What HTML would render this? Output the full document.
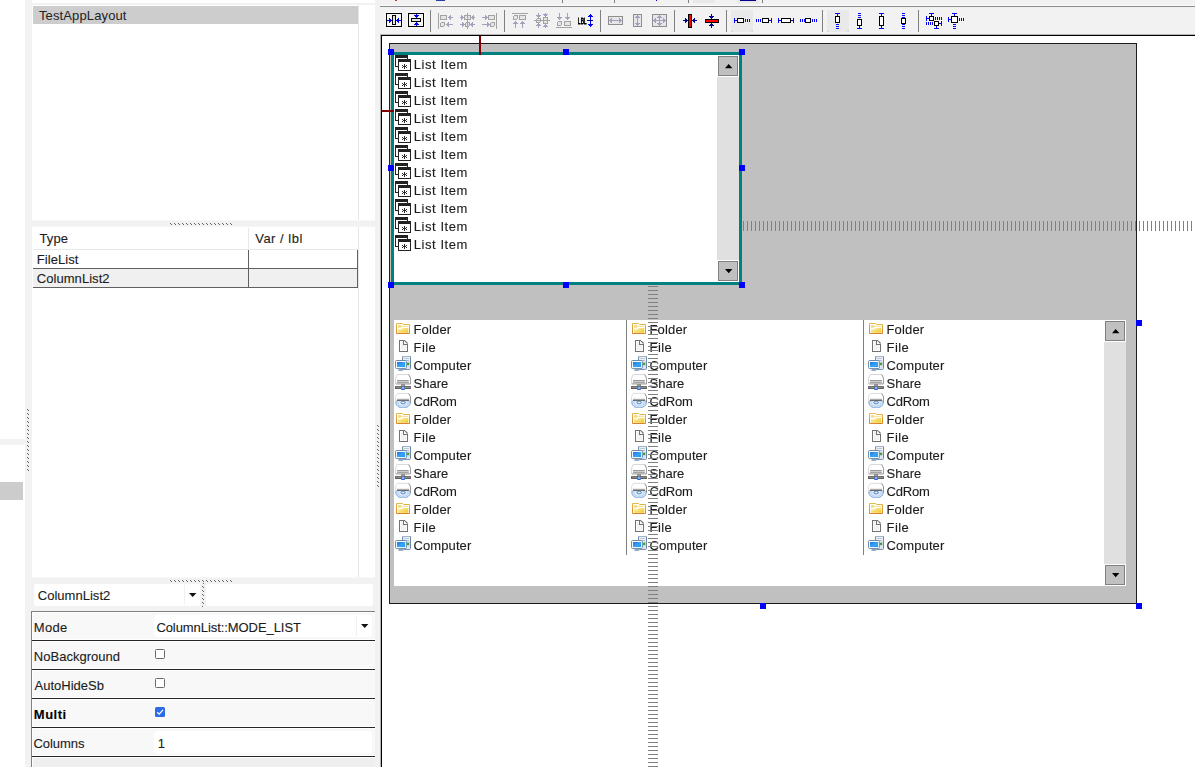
<!DOCTYPE html>
<html><head><meta charset="utf-8"><title>Layout designer</title>
<style>
html,body{margin:0;padding:0;background:#fff;}
#root{position:relative;width:1195px;height:767px;overflow:hidden;background:#fff;font-family:"Liberation Sans",sans-serif;font-size:13px;line-height:16px;color:#1c1c1c;}
#root div,#root svg{position:absolute;}
.t{white-space:pre;height:16px;-webkit-text-stroke:0.12px #1c1c1c;}
svg{overflow:visible;}
</style></head><body>
<div id="root">
<div style="left:0px;top:439px;width:25px;height:6px;background:#f2f2f2;"></div>
<div style="left:0px;top:482px;width:23px;height:18px;background:#cccccc;"></div>
<div style="left:25px;top:0px;width:7px;height:767px;background:#f2f2f2;"></div>
<div style="left:32px;top:3px;width:343px;height:2px;background:#f2f2f2;"></div>
<div style="left:32px;top:0px;width:343px;height:3px;background:#fff;border-radius:0 0 3px 3px;"></div>
<div style="left:32px;top:5px;width:343px;height:216px;background:#fff;"></div>
<div style="left:33px;top:6px;width:325px;height:18px;background:#cdcdcd;"></div>
<div style="left:358px;top:5px;width:1px;height:572px;background:#e6e6e6;"></div>
<div class="t" style="left:39px;top:8px;letter-spacing:0.12px;color:#222;-webkit-text-stroke:0;">TestAppLayout</div>
<div style="left:25px;top:221px;width:350px;height:6px;background:#f2f2f2;"></div>
<div style="left:32px;top:220px;width:343px;height:1px;background:#f9f9f9;"></div>
<div style="left:32px;top:226px;width:343px;height:1px;background:#f5f5f5;"></div>
<div style="left:32px;top:227px;width:343px;height:350px;background:#fff;"></div>
<div style="left:358px;top:227px;width:1px;height:350px;background:#e6e6e6;"></div>
<div class="t" style="left:39.5px;top:231px;letter-spacing:0.13px;">Type</div>
<div class="t" style="left:255.2px;top:231px;letter-spacing:0.5px;">Var / lbl</div>
<div style="left:33px;top:249px;width:325px;height:1px;background:#e8e8e8;"></div>
<div style="left:248px;top:228px;width:1px;height:21px;background:#e8e8e8;"></div>
<div style="left:33px;top:269px;width:325px;height:18px;background:#f0f0f0;"></div>
<div style="left:33px;top:268px;width:325px;height:1px;background:#606060;"></div>
<div style="left:33px;top:287px;width:325px;height:1px;background:#606060;"></div>
<div style="left:248px;top:250px;width:1px;height:38px;background:#606060;"></div>
<div style="left:357px;top:250px;width:1px;height:38px;background:#606060;"></div>
<div class="t" style="left:36.8px;top:252px;letter-spacing:0.06px;">FileList</div>
<div class="t" style="left:36.8px;top:271px;letter-spacing:0.05px;">ColumnList2</div>
<div style="left:25px;top:577px;width:350px;height:7px;background:#f2f2f2;"></div>
<div style="left:32px;top:577px;width:343px;height:1px;background:#f8f8f8;"></div>
<div style="left:25px;top:584px;width:350px;height:28px;background:#f2f2f2;"></div>
<div style="left:34px;top:584px;width:166px;height:22px;background:#fff;border-radius:2px;"></div>
<div style="left:184px;top:585px;width:1px;height:20px;background:#f0f0f0;"></div>
<div class="t" style="left:37.8px;top:588px;letter-spacing:0.02px;">ColumnList2</div>
<svg style="left:189px;top:593px" width="8" height="5" viewBox="0 0 8 5"><path d="M0 0H7.4L3.7 4Z" fill="#111"/></svg>
<div style="left:206px;top:584px;width:167px;height:22px;background:#fff;border-radius:2px;"></div>
<svg style="left:170px;top:223px" width="64" height="2" shape-rendering="crispEdges"><rect x="0" y="0" width="1" height="1" fill="#666"/><rect x="1" y="1" width="1" height="1" fill="#666"/><rect x="4" y="0" width="1" height="1" fill="#666"/><rect x="5" y="1" width="1" height="1" fill="#666"/><rect x="8" y="0" width="1" height="1" fill="#666"/><rect x="9" y="1" width="1" height="1" fill="#666"/><rect x="12" y="0" width="1" height="1" fill="#666"/><rect x="13" y="1" width="1" height="1" fill="#666"/><rect x="16" y="0" width="1" height="1" fill="#666"/><rect x="17" y="1" width="1" height="1" fill="#666"/><rect x="20" y="0" width="1" height="1" fill="#666"/><rect x="21" y="1" width="1" height="1" fill="#666"/><rect x="24" y="0" width="1" height="1" fill="#666"/><rect x="25" y="1" width="1" height="1" fill="#666"/><rect x="28" y="0" width="1" height="1" fill="#666"/><rect x="29" y="1" width="1" height="1" fill="#666"/><rect x="32" y="0" width="1" height="1" fill="#666"/><rect x="33" y="1" width="1" height="1" fill="#666"/><rect x="36" y="0" width="1" height="1" fill="#666"/><rect x="37" y="1" width="1" height="1" fill="#666"/><rect x="40" y="0" width="1" height="1" fill="#666"/><rect x="41" y="1" width="1" height="1" fill="#666"/><rect x="44" y="0" width="1" height="1" fill="#666"/><rect x="45" y="1" width="1" height="1" fill="#666"/><rect x="48" y="0" width="1" height="1" fill="#666"/><rect x="49" y="1" width="1" height="1" fill="#666"/><rect x="52" y="0" width="1" height="1" fill="#666"/><rect x="53" y="1" width="1" height="1" fill="#666"/><rect x="56" y="0" width="1" height="1" fill="#666"/><rect x="57" y="1" width="1" height="1" fill="#666"/><rect x="60" y="0" width="1" height="1" fill="#666"/><rect x="61" y="1" width="1" height="1" fill="#666"/></svg>
<svg style="left:170px;top:580px" width="64" height="2" shape-rendering="crispEdges"><rect x="0" y="0" width="1" height="1" fill="#666"/><rect x="1" y="1" width="1" height="1" fill="#666"/><rect x="4" y="0" width="1" height="1" fill="#666"/><rect x="5" y="1" width="1" height="1" fill="#666"/><rect x="8" y="0" width="1" height="1" fill="#666"/><rect x="9" y="1" width="1" height="1" fill="#666"/><rect x="12" y="0" width="1" height="1" fill="#666"/><rect x="13" y="1" width="1" height="1" fill="#666"/><rect x="16" y="0" width="1" height="1" fill="#666"/><rect x="17" y="1" width="1" height="1" fill="#666"/><rect x="20" y="0" width="1" height="1" fill="#666"/><rect x="21" y="1" width="1" height="1" fill="#666"/><rect x="24" y="0" width="1" height="1" fill="#666"/><rect x="25" y="1" width="1" height="1" fill="#666"/><rect x="28" y="0" width="1" height="1" fill="#666"/><rect x="29" y="1" width="1" height="1" fill="#666"/><rect x="32" y="0" width="1" height="1" fill="#666"/><rect x="33" y="1" width="1" height="1" fill="#666"/><rect x="36" y="0" width="1" height="1" fill="#666"/><rect x="37" y="1" width="1" height="1" fill="#666"/><rect x="40" y="0" width="1" height="1" fill="#666"/><rect x="41" y="1" width="1" height="1" fill="#666"/><rect x="44" y="0" width="1" height="1" fill="#666"/><rect x="45" y="1" width="1" height="1" fill="#666"/><rect x="48" y="0" width="1" height="1" fill="#666"/><rect x="49" y="1" width="1" height="1" fill="#666"/><rect x="52" y="0" width="1" height="1" fill="#666"/><rect x="53" y="1" width="1" height="1" fill="#666"/><rect x="56" y="0" width="1" height="1" fill="#666"/><rect x="57" y="1" width="1" height="1" fill="#666"/><rect x="60" y="0" width="1" height="1" fill="#666"/><rect x="61" y="1" width="1" height="1" fill="#666"/></svg>
<svg style="left:27px;top:409px" width="2" height="64" shape-rendering="crispEdges"><rect x="0" y="0" width="1" height="1" fill="#666"/><rect x="1" y="1" width="1" height="1" fill="#666"/><rect x="0" y="4" width="1" height="1" fill="#666"/><rect x="1" y="5" width="1" height="1" fill="#666"/><rect x="0" y="8" width="1" height="1" fill="#666"/><rect x="1" y="9" width="1" height="1" fill="#666"/><rect x="0" y="12" width="1" height="1" fill="#666"/><rect x="1" y="13" width="1" height="1" fill="#666"/><rect x="0" y="16" width="1" height="1" fill="#666"/><rect x="1" y="17" width="1" height="1" fill="#666"/><rect x="0" y="20" width="1" height="1" fill="#666"/><rect x="1" y="21" width="1" height="1" fill="#666"/><rect x="0" y="24" width="1" height="1" fill="#666"/><rect x="1" y="25" width="1" height="1" fill="#666"/><rect x="0" y="28" width="1" height="1" fill="#666"/><rect x="1" y="29" width="1" height="1" fill="#666"/><rect x="0" y="32" width="1" height="1" fill="#666"/><rect x="1" y="33" width="1" height="1" fill="#666"/><rect x="0" y="36" width="1" height="1" fill="#666"/><rect x="1" y="37" width="1" height="1" fill="#666"/><rect x="0" y="40" width="1" height="1" fill="#666"/><rect x="1" y="41" width="1" height="1" fill="#666"/><rect x="0" y="44" width="1" height="1" fill="#666"/><rect x="1" y="45" width="1" height="1" fill="#666"/><rect x="0" y="48" width="1" height="1" fill="#666"/><rect x="1" y="49" width="1" height="1" fill="#666"/><rect x="0" y="52" width="1" height="1" fill="#666"/><rect x="1" y="53" width="1" height="1" fill="#666"/><rect x="0" y="56" width="1" height="1" fill="#666"/><rect x="1" y="57" width="1" height="1" fill="#666"/><rect x="0" y="60" width="1" height="1" fill="#666"/><rect x="1" y="61" width="1" height="1" fill="#666"/></svg>
<svg style="left:202px;top:583px" width="2" height="25" shape-rendering="crispEdges"><rect x="1" y="0" width="1" height="1" fill="#666"/><rect x="0" y="3" width="1" height="1" fill="#666"/><rect x="1" y="4" width="1" height="1" fill="#666"/><rect x="0" y="7" width="1" height="1" fill="#666"/><rect x="1" y="8" width="1" height="1" fill="#666"/><rect x="0" y="11" width="1" height="1" fill="#666"/><rect x="1" y="12" width="1" height="1" fill="#666"/><rect x="0" y="15" width="1" height="1" fill="#666"/><rect x="1" y="16" width="1" height="1" fill="#666"/><rect x="0" y="19" width="1" height="1" fill="#666"/><rect x="1" y="20" width="1" height="1" fill="#666"/><rect x="0" y="23" width="1" height="1" fill="#666"/></svg>
<div style="left:32px;top:612px;width:343px;height:155px;background:#f8f8f8;"></div>
<div style="left:32px;top:757px;width:343px;height:10px;background:#efefef;"></div>
<div style="left:31px;top:611px;width:1px;height:156px;background:#808080;"></div>
<div style="left:32px;top:611px;width:343px;height:1px;background:#808080;"></div>
<div style="left:32px;top:612px;width:343px;height:1px;background:#fff;"></div>
<div style="left:32px;top:612px;width:1px;height:155px;background:#fff;"></div>
<div style="left:32px;top:639px;width:343px;height:1px;background:#fff;"></div>
<div style="left:32px;top:641px;width:343px;height:1px;background:#fff;"></div>
<div style="left:32px;top:640px;width:343px;height:1px;background:#262626;"></div>
<div style="left:32px;top:668px;width:343px;height:1px;background:#fff;"></div>
<div style="left:32px;top:670px;width:343px;height:1px;background:#fff;"></div>
<div style="left:32px;top:669px;width:343px;height:1px;background:#262626;"></div>
<div style="left:32px;top:697px;width:343px;height:1px;background:#fff;"></div>
<div style="left:32px;top:699px;width:343px;height:1px;background:#fff;"></div>
<div style="left:32px;top:698px;width:343px;height:1px;background:#262626;"></div>
<div style="left:32px;top:726px;width:343px;height:1px;background:#fff;"></div>
<div style="left:32px;top:728px;width:343px;height:1px;background:#fff;"></div>
<div style="left:32px;top:727px;width:343px;height:1px;background:#262626;"></div>
<div style="left:32px;top:755px;width:343px;height:1px;background:#fff;"></div>
<div style="left:32px;top:757px;width:343px;height:1px;background:#fff;"></div>
<div style="left:32px;top:756px;width:343px;height:1px;background:#262626;"></div>
<div class="t" style="left:33.8px;top:620px;letter-spacing:0.27px;">Mode</div>
<div class="t" style="left:33.8px;top:649px;letter-spacing:0.02px;">NoBackground</div>
<div class="t" style="left:34.5px;top:678px;">AutoHideSb</div>
<div class="t" style="left:33.8px;top:707px;letter-spacing:0.5px;font-weight:bold;color:#000;">Multi</div>
<div class="t" style="left:33.5px;top:736px;letter-spacing:-0.07px;">Columns</div>
<div style="left:154px;top:615px;width:218px;height:22px;background:#fff;border-radius:3px;"></div>
<div style="left:356px;top:616px;width:1px;height:20px;background:#f0f0f0;"></div>
<div class="t" style="left:156.4px;top:620px;letter-spacing:-0.07px;">ColumnList::MODE_LIST</div>
<svg style="left:361px;top:624px" width="8" height="5" viewBox="0 0 8 5"><path d="M0 0H7.4L3.7 4Z" fill="#111"/></svg>
<div style="left:155px;top:649px;width:10px;height:10px;background:#fff;border:1px solid #6a6a6a;border-radius:1.5px;box-sizing:border-box;"></div>
<div style="left:155px;top:678px;width:10px;height:10px;background:#fff;border:1px solid #6a6a6a;border-radius:1.5px;box-sizing:border-box;"></div>
<div style="left:155px;top:707px;width:10px;height:10px;background:#2b6be8;border-radius:1.5px;"></div>
<svg style="left:155px;top:707px" width="10" height="10" viewBox="0 0 10 10"><path d="M2.2 5.2L4.2 7.1L8 2.9" fill="none" stroke="#fff" stroke-width="1.3"/></svg>
<div style="left:154px;top:731px;width:218px;height:22px;background:#fff;border-radius:3px;"></div>
<div class="t" style="left:157.8px;top:736px;">1</div>
<div style="left:375px;top:0px;width:820px;height:36px;background:#f2f2f2;"></div>
<div style="left:375px;top:0px;width:6px;height:767px;background:#f2f2f2;"></div>
<svg style="left:0;top:0" width="1195" height="36" viewBox="0 0 1195 36" shape-rendering="crispEdges"><rect x="395" y="0" width="2" height="1" fill="#d03030"/><rect x="436" y="0" width="9" height="1" fill="#2a3ea0"/><rect x="562" y="0" width="1" height="3" fill="#808080"/><rect x="614" y="0" width="1" height="3" fill="#808080"/><rect x="688" y="0" width="1" height="3" fill="#808080"/><rect x="762" y="0" width="1" height="3" fill="#808080"/><rect x="656" y="0" width="1" height="1" fill="#0000ff"/><rect x="693" y="0" width="22" height="3" fill="#e8e8e8"/><rect x="737" y="0" width="22" height="3" fill="#e8e8e8"/><rect x="740" y="0" width="16" height="1" fill="#00008b"/><rect x="380" y="5" width="815" height="1" fill="#fafafa"/><rect x="380" y="6" width="815" height="1" fill="#8c8c8c"/><rect x="430" y="10" width="1" height="22" fill="#808080"/><rect x="504" y="10" width="1" height="22" fill="#808080"/><rect x="600" y="10" width="1" height="22" fill="#808080"/><rect x="674" y="10" width="1" height="22" fill="#808080"/><rect x="726" y="10" width="1" height="22" fill="#808080"/><rect x="822" y="10" width="1" height="22" fill="#808080"/><rect x="918" y="10" width="1" height="22" fill="#808080"/><rect x="731" y="10" width="22" height="22" fill="#e9e9e9"/><rect x="731" y="31" width="2" height="1" fill="#d8d8d8"/><rect x="731" y="30" width="1" height="1" fill="#d8d8d8"/><rect x="751" y="31" width="2" height="1" fill="#d8d8d8"/><rect x="752" y="30" width="1" height="1" fill="#d8d8d8"/><rect x="827" y="10" width="22" height="22" fill="#e9e9e9"/><rect x="827" y="31" width="2" height="1" fill="#d8d8d8"/><rect x="827" y="30" width="1" height="1" fill="#d8d8d8"/><rect x="847" y="31" width="2" height="1" fill="#d8d8d8"/><rect x="848" y="30" width="1" height="1" fill="#d8d8d8"/><rect x="385" y="12" width="18" height="16" fill="#fafafa"/><rect x="386.5" y="13.5" width="15" height="13" fill="#f6f6f2" stroke="#000"/><rect x="392.5" y="15.5" width="3" height="9" fill="#e4e4e4" stroke="#000"/><rect x="387" y="20" width="5" height="1" fill="#0000ff"/><rect x="390" y="19" width="1" height="3" fill="#0000ff"/><rect x="389" y="18" width="1" height="5" fill="#0000ff"/><rect x="396" y="20" width="5" height="1" fill="#0000ff"/><rect x="397" y="19" width="1" height="3" fill="#0000ff"/><rect x="398" y="18" width="1" height="5" fill="#0000ff"/><rect x="407" y="12" width="18" height="16" fill="#fafafa"/><rect x="408.5" y="13.5" width="15" height="13" fill="#f6f6f2" stroke="#000"/><rect x="411.5" y="18.5" width="9" height="3" fill="#e4e4e4" stroke="#000"/><rect x="416" y="14" width="1" height="4" fill="#0000ff"/><rect x="415" y="16" width="3" height="1" fill="#0000ff"/><rect x="414" y="15" width="5" height="1" fill="#0000ff"/><rect x="416" y="22" width="1" height="4" fill="#0000ff"/><rect x="415" y="23" width="3" height="1" fill="#0000ff"/><rect x="414" y="24" width="5" height="1" fill="#0000ff"/><rect x="438" y="13" width="1" height="16" fill="#a3a3a3"/><rect x="440.5" y="15.5" width="6" height="4" fill="#e6e6e6" stroke="#a3a3a3"/><rect x="448" y="17" width="5" height="1" fill="#a2a2c0"/><rect x="449" y="16" width="1" height="3" fill="#a2a2c0"/><rect x="450" y="15" width="1" height="5" fill="#a2a2c0"/><rect x="440.5" y="22.5" width="4" height="4" rx="1.5" fill="#e6e6e6" stroke="#a3a3a3"/><rect x="446" y="24" width="7" height="1" fill="#a2a2c0"/><rect x="447" y="23" width="1" height="3" fill="#a2a2c0"/><rect x="448" y="22" width="1" height="5" fill="#a2a2c0"/><rect x="467" y="13" width="1" height="16" fill="#a3a3a3"/><rect x="464.5" y="15.5" width="6" height="4" fill="#e6e6e6" stroke="#a3a3a3"/><rect x="460" y="17" width="4" height="1" fill="#a2a2c0"/><rect x="462" y="16" width="1" height="3" fill="#a2a2c0"/><rect x="461" y="15" width="1" height="5" fill="#a2a2c0"/><rect x="471" y="17" width="4" height="1" fill="#a2a2c0"/><rect x="472" y="16" width="1" height="3" fill="#a2a2c0"/><rect x="473" y="15" width="1" height="5" fill="#a2a2c0"/><rect x="465.5" y="22.5" width="4" height="4" rx="1.5" fill="#e6e6e6" stroke="#a3a3a3"/><rect x="460" y="24" width="5" height="1" fill="#a2a2c0"/><rect x="463" y="23" width="1" height="3" fill="#a2a2c0"/><rect x="462" y="22" width="1" height="5" fill="#a2a2c0"/><rect x="470" y="24" width="5" height="1" fill="#a2a2c0"/><rect x="471" y="23" width="1" height="3" fill="#a2a2c0"/><rect x="472" y="22" width="1" height="5" fill="#a2a2c0"/><rect x="467" y="14" width="1" height="14" fill="#a3a3a3"/><rect x="496" y="13" width="1" height="16" fill="#a3a3a3"/><rect x="488.5" y="15.5" width="6" height="4" fill="#e6e6e6" stroke="#a3a3a3"/><rect x="482" y="17" width="6" height="1" fill="#a2a2c0"/><rect x="486" y="16" width="1" height="3" fill="#a2a2c0"/><rect x="485" y="15" width="1" height="5" fill="#a2a2c0"/><rect x="490.5" y="22.5" width="4" height="4" rx="1.5" fill="#e6e6e6" stroke="#a3a3a3"/><rect x="482" y="24" width="8" height="1" fill="#a2a2c0"/><rect x="488" y="23" width="1" height="3" fill="#a2a2c0"/><rect x="487" y="22" width="1" height="5" fill="#a2a2c0"/><rect x="512" y="13" width="16" height="1" fill="#a3a3a3"/><rect x="513.5" y="15.5" width="4" height="4" rx="1.5" fill="#e6e6e6" stroke="#a3a3a3"/><rect x="519.5" y="15.5" width="6" height="4" fill="#e6e6e6" stroke="#a3a3a3"/><rect x="515" y="21" width="1" height="7" fill="#a2a2c0"/><rect x="514" y="22" width="3" height="1" fill="#a2a2c0"/><rect x="513" y="23" width="5" height="1" fill="#a2a2c0"/><rect x="522" y="21" width="1" height="7" fill="#a2a2c0"/><rect x="521" y="22" width="3" height="1" fill="#a2a2c0"/><rect x="520" y="23" width="5" height="1" fill="#a2a2c0"/><rect x="534" y="20" width="16" height="1" fill="#a3a3a3"/><rect x="536.5" y="18.5" width="4" height="4" rx="1.5" fill="#e6e6e6" stroke="#a3a3a3"/><rect x="543.5" y="17.5" width="4" height="6" fill="#e6e6e6" stroke="#a3a3a3"/><rect x="534" y="20" width="16" height="1" fill="#a3a3a3"/><rect x="538" y="13" width="1" height="5" fill="#a2a2c0"/><rect x="537" y="16" width="3" height="1" fill="#a2a2c0"/><rect x="536" y="15" width="5" height="1" fill="#a2a2c0"/><rect x="538" y="23" width="1" height="5" fill="#a2a2c0"/><rect x="537" y="24" width="3" height="1" fill="#a2a2c0"/><rect x="536" y="25" width="5" height="1" fill="#a2a2c0"/><rect x="545" y="13" width="1" height="4" fill="#a2a2c0"/><rect x="544" y="15" width="3" height="1" fill="#a2a2c0"/><rect x="543" y="14" width="5" height="1" fill="#a2a2c0"/><rect x="545" y="24" width="1" height="4" fill="#a2a2c0"/><rect x="544" y="25" width="3" height="1" fill="#a2a2c0"/><rect x="543" y="26" width="5" height="1" fill="#a2a2c0"/><rect x="556" y="27" width="16" height="1" fill="#a3a3a3"/><rect x="557.5" y="21.5" width="4" height="4" rx="1.5" fill="#e6e6e6" stroke="#a3a3a3"/><rect x="564.5" y="21.5" width="6" height="4" fill="#e6e6e6" stroke="#a3a3a3"/><rect x="559" y="13" width="1" height="7" fill="#a2a2c0"/><rect x="558" y="18" width="3" height="1" fill="#a2a2c0"/><rect x="557" y="17" width="5" height="1" fill="#a2a2c0"/><rect x="567" y="13" width="1" height="7" fill="#a2a2c0"/><rect x="566" y="18" width="3" height="1" fill="#a2a2c0"/><rect x="565" y="17" width="5" height="1" fill="#a2a2c0"/><rect x="590" y="15" width="1" height="11" fill="#0000ff"/><rect x="590" y="14" width="1" height="1" fill="#0000ff"/><rect x="589" y="15" width="3" height="1" fill="#0000ff"/><rect x="588" y="16" width="5" height="1" fill="#0000ff"/><rect x="590" y="26" width="1" height="1" fill="#0000ff"/><rect x="589" y="25" width="3" height="1" fill="#0000ff"/><rect x="588" y="24" width="5" height="1" fill="#0000ff"/><rect x="587" y="20" width="6" height="1" fill="#000080"/><rect x="608.5" y="16.5" width="14" height="8" fill="#e6e6e6" stroke="#8e8e8e"/><rect x="609" y="20" width="13" height="1" fill="#a2a2c0"/><rect x="610" y="19" width="1" height="3" fill="#a2a2c0"/><rect x="611" y="18" width="1" height="5" fill="#a2a2c0"/><rect x="620" y="19" width="1" height="3" fill="#a2a2c0"/><rect x="619" y="18" width="1" height="5" fill="#a2a2c0"/><rect x="633.5" y="14.5" width="8" height="12" fill="#e6e6e6" stroke="#8e8e8e"/><rect x="637" y="15" width="1" height="11" fill="#a2a2c0"/><rect x="636" y="16" width="3" height="1" fill="#a2a2c0"/><rect x="635" y="17" width="5" height="1" fill="#a2a2c0"/><rect x="636" y="24" width="3" height="1" fill="#a2a2c0"/><rect x="635" y="23" width="5" height="1" fill="#a2a2c0"/><rect x="652.5" y="14.5" width="14" height="12" fill="#e6e6e6" stroke="#8e8e8e"/><rect x="653" y="20" width="13" height="1" fill="#a2a2c0"/><rect x="659" y="15" width="1" height="11" fill="#a2a2c0"/><rect x="654" y="19" width="1" height="3" fill="#a2a2c0"/><rect x="655" y="18" width="1" height="5" fill="#a2a2c0"/><rect x="664" y="19" width="1" height="3" fill="#a2a2c0"/><rect x="663" y="18" width="1" height="5" fill="#a2a2c0"/><rect x="658" y="16" width="3" height="1" fill="#a2a2c0"/><rect x="657" y="17" width="5" height="1" fill="#a2a2c0"/><rect x="658" y="24" width="3" height="1" fill="#a2a2c0"/><rect x="657" y="23" width="5" height="1" fill="#a2a2c0"/><rect x="688.5" y="14.5" width="3" height="13" fill="#ff0000" stroke="#000"/><rect x="683" y="20" width="5" height="1" fill="#00008b"/><rect x="686" y="19" width="1" height="3" fill="#00008b"/><rect x="685" y="18" width="1" height="5" fill="#00008b"/><rect x="692" y="20" width="5" height="1" fill="#00008b"/><rect x="693" y="19" width="1" height="3" fill="#00008b"/><rect x="694" y="18" width="1" height="5" fill="#00008b"/><rect x="705.5" y="19.5" width="13" height="3" fill="#ff0000" stroke="#000"/><rect x="711" y="14" width="1" height="5" fill="#00008b"/><rect x="710" y="17" width="3" height="1" fill="#00008b"/><rect x="709" y="16" width="5" height="1" fill="#00008b"/><rect x="711" y="23" width="1" height="5" fill="#00008b"/><rect x="710" y="24" width="3" height="1" fill="#00008b"/><rect x="709" y="25" width="5" height="1" fill="#00008b"/><rect x="734" y="18" width="1" height="5" fill="#0000ff"/><rect x="735" y="20" width="2" height="1" fill="#0000ff"/><rect x="737.5" y="18.5" width="6" height="4" fill="#fff" stroke="#000"/><rect x="745" y="19" width="1" height="3" fill="#0000ff"/><rect x="747" y="19" width="1" height="3" fill="#0000ff"/><rect x="749" y="19" width="1" height="3" fill="#0000ff"/><rect x="756" y="19" width="1" height="3" fill="#0000ff"/><rect x="758" y="19" width="1" height="3" fill="#0000ff"/><rect x="760" y="19" width="1" height="3" fill="#0000ff"/><rect x="762.5" y="18.5" width="6" height="4" fill="#fff" stroke="#000"/><rect x="769" y="20" width="2" height="1" fill="#0000ff"/><rect x="771" y="18" width="1" height="5" fill="#0000ff"/><rect x="778" y="18" width="1" height="5" fill="#0000ff"/><rect x="779" y="20" width="2" height="1" fill="#0000ff"/><rect x="781.5" y="18.5" width="9" height="4" fill="#fff" stroke="#000"/><rect x="791" y="20" width="2" height="1" fill="#0000ff"/><rect x="793" y="18" width="1" height="5" fill="#0000ff"/><rect x="800" y="19" width="1" height="3" fill="#0000ff"/><rect x="802" y="19" width="1" height="3" fill="#0000ff"/><rect x="804" y="19" width="1" height="3" fill="#0000ff"/><rect x="805.5" y="18.5" width="5" height="4" rx="1" fill="#fff" stroke="#000"/><rect x="812" y="19" width="1" height="3" fill="#0000ff"/><rect x="814" y="19" width="1" height="3" fill="#0000ff"/><rect x="816" y="19" width="1" height="3" fill="#0000ff"/><rect x="835" y="13" width="5" height="1" fill="#0000ff"/><rect x="837" y="14" width="1" height="2" fill="#0000ff"/><rect x="835.5" y="16.5" width="4" height="6" fill="#fff" stroke="#000"/><rect x="836" y="24" width="3" height="1" fill="#0000ff"/><rect x="836" y="26" width="3" height="1" fill="#0000ff"/><rect x="836" y="28" width="3" height="1" fill="#0000ff"/><rect x="858" y="13" width="3" height="1" fill="#0000ff"/><rect x="858" y="15" width="3" height="1" fill="#0000ff"/><rect x="858" y="17" width="3" height="1" fill="#0000ff"/><rect x="857.5" y="19.5" width="4" height="6" fill="#fff" stroke="#000"/><rect x="859" y="26" width="1" height="2" fill="#0000ff"/><rect x="857" y="28" width="5" height="1" fill="#0000ff"/><rect x="879" y="13" width="5" height="1" fill="#0000ff"/><rect x="881" y="14" width="1" height="2" fill="#0000ff"/><rect x="879.5" y="16.5" width="4" height="9" fill="#fff" stroke="#000"/><rect x="881" y="26" width="1" height="2" fill="#0000ff"/><rect x="879" y="28" width="5" height="1" fill="#0000ff"/><rect x="902" y="13" width="3" height="1" fill="#0000ff"/><rect x="902" y="15" width="3" height="1" fill="#0000ff"/><rect x="902" y="17" width="3" height="1" fill="#0000ff"/><rect x="901.5" y="18.5" width="4" height="5" rx="1" fill="#fff" stroke="#000"/><rect x="902" y="24" width="3" height="1" fill="#0000ff"/><rect x="902" y="26" width="3" height="1" fill="#0000ff"/><rect x="902" y="28" width="3" height="1" fill="#0000ff"/><rect x="929" y="13" width="5" height="1" fill="#0000ff"/><rect x="931" y="14" width="1" height="2" fill="#0000ff"/><rect x="926" y="16" width="1" height="5" fill="#0000ff"/><rect x="927" y="18" width="2" height="1" fill="#0000ff"/><rect x="935" y="17" width="1" height="3" fill="#0000ff"/><rect x="937" y="17" width="1" height="3" fill="#0000ff"/><rect x="939" y="17" width="1" height="3" fill="#0000ff"/><rect x="941" y="17" width="1" height="3" fill="#0000ff"/><rect x="926" y="22" width="1" height="3" fill="#0000ff"/><rect x="928" y="22" width="1" height="3" fill="#0000ff"/><rect x="930" y="22" width="1" height="3" fill="#0000ff"/><rect x="932" y="22" width="1" height="3" fill="#0000ff"/><rect x="941" y="21" width="1" height="5" fill="#0000ff"/><rect x="939" y="23" width="2" height="1" fill="#0000ff"/><rect x="936" y="26" width="1" height="2" fill="#0000ff"/><rect x="934" y="28" width="5" height="1" fill="#0000ff"/><rect x="929.5" y="16.5" width="4" height="4" fill="#fff" stroke="#000"/><rect x="934.5" y="21.5" width="4" height="4" fill="#fff" stroke="#000"/><rect x="952" y="13" width="5" height="1" fill="#0000ff"/><rect x="954" y="14" width="1" height="2" fill="#0000ff"/><rect x="948" y="17" width="1" height="5" fill="#0000ff"/><rect x="949" y="19" width="2" height="1" fill="#0000ff"/><rect x="959" y="18" width="1" height="3" fill="#0000ff"/><rect x="961" y="18" width="1" height="3" fill="#0000ff"/><rect x="963" y="18" width="1" height="3" fill="#0000ff"/><rect x="953" y="24" width="3" height="1" fill="#0000ff"/><rect x="953" y="26" width="3" height="1" fill="#0000ff"/><rect x="953" y="28" width="3" height="1" fill="#0000ff"/><rect x="951.5" y="16.5" width="6" height="6" fill="#fff" stroke="#000"/></svg>
<svg style="left:577px;top:12px;will-change:transform" width="12" height="16" viewBox="0 0 12 16"><text transform="scale(0.5,1)" x="1.70 7.40 13.70" y="11.65" font-family="Liberation Sans,sans-serif" font-size="9.9" fill="#000" stroke="#000" stroke-width="0.6" vector-effect="non-scaling-stroke">LBL</text></svg>
<svg style="left:377px;top:425px" width="2" height="64" shape-rendering="crispEdges"><rect x="0" y="0" width="1" height="1" fill="#666"/><rect x="1" y="1" width="1" height="1" fill="#666"/><rect x="0" y="4" width="1" height="1" fill="#666"/><rect x="1" y="5" width="1" height="1" fill="#666"/><rect x="0" y="8" width="1" height="1" fill="#666"/><rect x="1" y="9" width="1" height="1" fill="#666"/><rect x="0" y="12" width="1" height="1" fill="#666"/><rect x="1" y="13" width="1" height="1" fill="#666"/><rect x="0" y="16" width="1" height="1" fill="#666"/><rect x="1" y="17" width="1" height="1" fill="#666"/><rect x="0" y="20" width="1" height="1" fill="#666"/><rect x="1" y="21" width="1" height="1" fill="#666"/><rect x="0" y="24" width="1" height="1" fill="#666"/><rect x="1" y="25" width="1" height="1" fill="#666"/><rect x="0" y="28" width="1" height="1" fill="#666"/><rect x="1" y="29" width="1" height="1" fill="#666"/><rect x="0" y="32" width="1" height="1" fill="#666"/><rect x="1" y="33" width="1" height="1" fill="#666"/><rect x="0" y="36" width="1" height="1" fill="#666"/><rect x="1" y="37" width="1" height="1" fill="#666"/><rect x="0" y="40" width="1" height="1" fill="#666"/><rect x="1" y="41" width="1" height="1" fill="#666"/><rect x="0" y="44" width="1" height="1" fill="#666"/><rect x="1" y="45" width="1" height="1" fill="#666"/><rect x="0" y="48" width="1" height="1" fill="#666"/><rect x="1" y="49" width="1" height="1" fill="#666"/><rect x="0" y="52" width="1" height="1" fill="#666"/><rect x="1" y="53" width="1" height="1" fill="#666"/><rect x="0" y="56" width="1" height="1" fill="#666"/><rect x="1" y="57" width="1" height="1" fill="#666"/><rect x="0" y="60" width="1" height="1" fill="#666"/><rect x="1" y="61" width="1" height="1" fill="#666"/></svg>
<div style="left:380px;top:34px;width:815px;height:733px;background:#fff;"></div>
<div style="left:380px;top:34px;width:815px;height:1px;background:#b4b4b4;"></div>
<div style="left:380px;top:35px;width:815px;height:1px;background:#000;"></div>
<div style="left:380px;top:34px;width:1px;height:733px;background:#b4b4b4;"></div>
<div style="left:381px;top:35px;width:1px;height:732px;background:#000;"></div>
<div style="left:389px;top:43px;width:748px;height:561px;background:#c0c0c0;border:1px solid #1c1c1c;box-sizing:border-box;"></div>
<div style="left:394px;top:55px;width:345px;height:227px;background:#fff;"></div>
<div style="left:717px;top:55px;width:22px;height:227px;background:#e0e0e0;"></div>
<div style="left:717px;top:55px;width:22px;height:22px;background:#fff;"></div>
<div style="left:718px;top:56px;width:20px;height:20px;background:#c0c0c0;border:1px solid #808080;box-sizing:border-box;"></div>
<svg style="left:725px;top:64px" width="8" height="5" viewBox="0 0 8 5"><path d="M0 4.3L3.7 0L7.4 4.3Z" fill="#000"/></svg>
<div style="left:717px;top:260px;width:22px;height:22px;background:#fff;"></div>
<div style="left:718px;top:261px;width:20px;height:20px;background:#c0c0c0;border:1px solid #808080;box-sizing:border-box;"></div>
<svg style="left:725px;top:269px" width="8" height="5" viewBox="0 0 8 5"><path d="M0 0H7.4L3.7 4.3Z" fill="#000"/></svg>
<div style="left:391px;top:52px;width:351px;height:233px;background:transparent;border:3px solid #008080;box-sizing:border-box;"></div>
<div style="left:394px;top:320px;width:732px;height:266px;background:#fff;"></div>
<div style="left:1104px;top:320px;width:22px;height:266px;background:#e0e0e0;"></div>
<div style="left:1104px;top:320px;width:22px;height:22px;background:#fff;"></div>
<div style="left:1105px;top:321px;width:20px;height:20px;background:#c0c0c0;border:1px solid #808080;box-sizing:border-box;"></div>
<svg style="left:1112px;top:329px" width="8" height="5" viewBox="0 0 8 5"><path d="M0 4.3L3.7 0L7.4 4.3Z" fill="#000"/></svg>
<div style="left:1104px;top:564px;width:22px;height:22px;background:#fff;"></div>
<div style="left:1105px;top:565px;width:20px;height:20px;background:#c0c0c0;border:1px solid #808080;box-sizing:border-box;"></div>
<svg style="left:1112px;top:573px" width="8" height="5" viewBox="0 0 8 5"><path d="M0 0H7.4L3.7 4.3Z" fill="#000"/></svg>
<div style="left:626px;top:320px;width:1px;height:235px;background:#808080;"></div>
<div style="left:863px;top:320px;width:1px;height:235px;background:#808080;"></div>
<div style="left:479px;top:36px;width:2px;height:19px;background:#800000;"></div>
<div style="left:382px;top:110px;width:12px;height:2px;background:#800000;"></div>
<svg style="left:0;top:0" width="1195" height="767" viewBox="0 0 1195 767"><defs>
<linearGradient id="gfo" x1="0" y1="0" x2="0" y2="1"><stop offset="0" stop-color="#e3b94a"/><stop offset="1" stop-color="#d9822b"/></linearGradient>
<linearGradient id="gfi" x1="0" y1="0" x2="1" y2="1"><stop offset="0" stop-color="#fdf3c0"/><stop offset="1" stop-color="#efc51d"/></linearGradient>
<linearGradient id="gsc" x1="0" y1="0" x2="1" y2="1"><stop offset="0" stop-color="#1a74e0"/><stop offset="0.55" stop-color="#3aa2f6"/><stop offset="1" stop-color="#14a0fb"/></linearGradient>
<linearGradient id="gdr" x1="0" y1="0" x2="0" y2="1"><stop offset="0" stop-color="#ffffff"/><stop offset="0.7" stop-color="#f2f2f2"/><stop offset="1" stop-color="#c8c8c8"/></linearGradient>
<linearGradient id="gdr2" x1="0" y1="0" x2="0" y2="1"><stop offset="0" stop-color="#e4e4e4"/><stop offset="0.12" stop-color="#ffffff"/><stop offset="1" stop-color="#fbfbfb"/></linearGradient>
<symbol id="iLI" viewBox="0 0 16 16" shape-rendering="crispEdges">
 <rect x="0.5" y="0.5" width="12" height="11" fill="#fff" stroke="#222"/><rect x="0" y="0" width="13" height="3" fill="#222"/>
 <rect x="3.5" y="4.5" width="12" height="11" fill="#fff" stroke="#222"/><rect x="3" y="4" width="13" height="3" fill="#222"/>
 <path d="M9 9h1v5h-1zM7 10h1v1h-1zM11 10h1v1h-1zM8 11h3v1h-3zM7 12h1v1h-1zM11 12h1v1h-1z" fill="#2a2a2a"/>
</symbol>
<symbol id="iFo" viewBox="0 0 16 16">
 <path d="M1.5 3.5H7.7L8.6 4.5H14.5V13.5H1.5Z" fill="#fffef8" stroke="url(#gfo)"/>
 <rect x="5.5" y="5.9" width="7.7" height="0.9" fill="#f3dc8c"/><rect x="3" y="5" width="3" height="2.7" rx="0.4" fill="#f4da80"/>
 <path d="M3 12.8V9.3H6.8L7.8 8H13.3V12.8Z" fill="url(#gfi)"/>
</symbol>
<symbol id="iFi" viewBox="0 0 16 16">
 <path d="M5 3H10L12 5V13H5Z" fill="#fff"/>
 <path d="M5.7 3.7H8V7H11.3V12.3H5.7Z" fill="#f2f2f2"/>
 <path d="M4 2h6v1h-5v10h7v-7h1v8h-9zM8 3h1v3h3v1h-4z" fill="#727272" shape-rendering="crispEdges"/>
 <path d="M10 2.9L12.6 5.5" fill="none" stroke="#727272" stroke-width="1.15"/>
</symbol>
<symbol id="iCo" viewBox="0 0 16 16">
 <rect x="7.6" y="0.1" width="7.9" height="13.3" rx="0.9" fill="#eef2f7" stroke="#6c88a8"/>
 <rect x="9.1" y="2.1" width="4.8" height="0.8" fill="#a9bbd0"/><rect x="9.1" y="4.1" width="4.8" height="0.7" fill="#8fa4bd"/>
 <rect x="11.8" y="5.6" width="3.2" height="4.6" fill="#d3ccf2"/><rect x="12.2" y="10.2" width="2.6" height="2.4" fill="#dde3ea"/>
 <rect x="11.9" y="6.8" width="2.1" height="2.2" rx="0.3" fill="#3aa818"/>
 <rect x="0.55" y="4.5" width="10.8" height="8.1" rx="1.1" fill="#fdfdfb" stroke="#6c88a8"/>
 <rect x="2.05" y="6" width="8" height="5.1" fill="url(#gsc)"/>
 <ellipse cx="5.75" cy="14.1" rx="2.75" ry="0.95" fill="#7e98b4"/><rect x="4.4" y="13.1" width="2.8" height="0.9" fill="#6c88a8"/>
 <ellipse cx="5.75" cy="14" rx="1.5" ry="0.4" fill="#b9c8d8"/>
</symbol>
<symbol id="iSh" viewBox="0 0 16 16">
 <path d="M2.3 0.4H13.7L15.5 4.2V9.9H0.5V4.2Z" fill="url(#gdr2)" stroke="#d4d4d4" stroke-width="0.9"/>
 <path d="M13.7 0.4L15.5 4.2V9.9H0.8" fill="none" stroke="#9a9a9a" stroke-width="0.9"/>
 <rect x="2" y="6.9" width="11.8" height="1" fill="#d2d2d2"/>
 <rect x="2" y="6" width="11.8" height="0.9" fill="#8e8e8e"/><rect x="2" y="7.9" width="11.8" height="0.9" fill="#8e8e8e"/>
 <rect x="6.2" y="10.3" width="3.7" height="2" fill="#707070"/><rect x="7" y="10.8" width="2.1" height="1" fill="#a8a8a8"/>
 <rect x="0.05" y="12.1" width="15.85" height="2.9" fill="#5e5e5e"/>
 <rect x="1.1" y="13.2" width="4.8" height="0.75" fill="#9c9c9c"/><rect x="10.1" y="13.2" width="4.9" height="0.75" fill="#9c9c9c"/>
 <ellipse cx="8.05" cy="15.3" rx="2" ry="0.75" fill="#1a52da"/>
 <rect x="6.75" y="12.8" width="2.7" height="2.4" fill="#7cb2ff"/>
</symbol>
<symbol id="iCd" viewBox="0 0 16 16">
 <path d="M2.3 1.4H13.7L15.5 4.6V10.8H0.5V4.6Z" fill="url(#gdr2)" stroke="#dcdcdc" stroke-width="0.9"/>
 <path d="M13.7 1.4L15.5 4.6V10.8" fill="none" stroke="#8c8c8c" stroke-width="0.9"/>
 <rect x="2" y="6.2" width="12" height="1.6" fill="url(#gsl)"/>
 <g clip-path="url(#cdclip)">
  <ellipse cx="8.05" cy="10.9" rx="7.2" ry="5.1" fill="#dbe9f8" stroke="#5b8fce" stroke-width="0.75"/>
  <ellipse cx="8.05" cy="10.8" rx="5.2" ry="3.6" fill="none" stroke="#b9d3f0" stroke-width="1.1"/>
  <ellipse cx="8.15" cy="10.5" rx="2.3" ry="1.35" fill="#a9c6e8" stroke="#3f78bc" stroke-width="0.7"/>
  <ellipse cx="8.2" cy="10.45" rx="1" ry="0.5" fill="#fff"/>
 </g>
 <rect x="2" y="7.75" width="12" height="1.05" fill="#4e4e4e"/>
</symbol>
<clipPath id="cdclip"><rect x="0" y="8.6" width="16" height="8"/></clipPath>
<linearGradient id="gsl" x1="0" y1="0" x2="0" y2="1"><stop offset="0" stop-color="#f6f6f6"/><stop offset="1" stop-color="#b0b0b0"/></linearGradient>
</defs><use href="#iLI" x="395" y="55" width="16" height="16"/><use href="#iLI" x="395" y="73" width="16" height="16"/><use href="#iLI" x="395" y="91" width="16" height="16"/><use href="#iLI" x="395" y="109" width="16" height="16"/><use href="#iLI" x="395" y="127" width="16" height="16"/><use href="#iLI" x="395" y="145" width="16" height="16"/><use href="#iLI" x="395" y="163" width="16" height="16"/><use href="#iLI" x="395" y="181" width="16" height="16"/><use href="#iLI" x="395" y="199" width="16" height="16"/><use href="#iLI" x="395" y="217" width="16" height="16"/><use href="#iLI" x="395" y="235" width="16" height="16"/><use href="#iFo" x="395" y="320" width="16" height="16"/><use href="#iFi" x="395" y="338" width="16" height="16"/><use href="#iCo" x="395" y="356" width="16" height="16"/><use href="#iSh" x="395" y="374" width="16" height="16"/><use href="#iCd" x="395" y="392" width="16" height="16"/><use href="#iFo" x="395" y="410" width="16" height="16"/><use href="#iFi" x="395" y="428" width="16" height="16"/><use href="#iCo" x="395" y="446" width="16" height="16"/><use href="#iSh" x="395" y="464" width="16" height="16"/><use href="#iCd" x="395" y="482" width="16" height="16"/><use href="#iFo" x="395" y="500" width="16" height="16"/><use href="#iFi" x="395" y="518" width="16" height="16"/><use href="#iCo" x="395" y="536" width="16" height="16"/><use href="#iFo" x="631" y="320" width="16" height="16"/><use href="#iFi" x="631" y="338" width="16" height="16"/><use href="#iCo" x="631" y="356" width="16" height="16"/><use href="#iSh" x="631" y="374" width="16" height="16"/><use href="#iCd" x="631" y="392" width="16" height="16"/><use href="#iFo" x="631" y="410" width="16" height="16"/><use href="#iFi" x="631" y="428" width="16" height="16"/><use href="#iCo" x="631" y="446" width="16" height="16"/><use href="#iSh" x="631" y="464" width="16" height="16"/><use href="#iCd" x="631" y="482" width="16" height="16"/><use href="#iFo" x="631" y="500" width="16" height="16"/><use href="#iFi" x="631" y="518" width="16" height="16"/><use href="#iCo" x="631" y="536" width="16" height="16"/><use href="#iFo" x="868" y="320" width="16" height="16"/><use href="#iFi" x="868" y="338" width="16" height="16"/><use href="#iCo" x="868" y="356" width="16" height="16"/><use href="#iSh" x="868" y="374" width="16" height="16"/><use href="#iCd" x="868" y="392" width="16" height="16"/><use href="#iFo" x="868" y="410" width="16" height="16"/><use href="#iFi" x="868" y="428" width="16" height="16"/><use href="#iCo" x="868" y="446" width="16" height="16"/><use href="#iSh" x="868" y="464" width="16" height="16"/><use href="#iCd" x="868" y="482" width="16" height="16"/><use href="#iFo" x="868" y="500" width="16" height="16"/><use href="#iFi" x="868" y="518" width="16" height="16"/><use href="#iCo" x="868" y="536" width="16" height="16"/></svg>
<div class="t" style="left:413.8px;top:57px;letter-spacing:0.55px;">List Item</div>
<div class="t" style="left:413.8px;top:75px;letter-spacing:0.55px;">List Item</div>
<div class="t" style="left:413.8px;top:93px;letter-spacing:0.55px;">List Item</div>
<div class="t" style="left:413.8px;top:111px;letter-spacing:0.55px;">List Item</div>
<div class="t" style="left:413.8px;top:129px;letter-spacing:0.55px;">List Item</div>
<div class="t" style="left:413.8px;top:147px;letter-spacing:0.55px;">List Item</div>
<div class="t" style="left:413.8px;top:165px;letter-spacing:0.55px;">List Item</div>
<div class="t" style="left:413.8px;top:183px;letter-spacing:0.55px;">List Item</div>
<div class="t" style="left:413.8px;top:201px;letter-spacing:0.55px;">List Item</div>
<div class="t" style="left:413.8px;top:219px;letter-spacing:0.55px;">List Item</div>
<div class="t" style="left:413.8px;top:237px;letter-spacing:0.55px;">List Item</div>
<div class="t" style="left:413.5px;top:322px;letter-spacing:0.16px;">Folder</div>
<div class="t" style="left:413.5px;top:340px;letter-spacing:0.45px;">File</div>
<div class="t" style="left:413.5px;top:358px;letter-spacing:0.1px;">Computer</div>
<div class="t" style="left:413.5px;top:376px;">Share</div>
<div class="t" style="left:413.5px;top:394px;letter-spacing:-0.2px;">CdRom</div>
<div class="t" style="left:413.5px;top:412px;letter-spacing:0.16px;">Folder</div>
<div class="t" style="left:413.5px;top:430px;letter-spacing:0.45px;">File</div>
<div class="t" style="left:413.5px;top:448px;letter-spacing:0.1px;">Computer</div>
<div class="t" style="left:413.5px;top:466px;">Share</div>
<div class="t" style="left:413.5px;top:484px;letter-spacing:-0.2px;">CdRom</div>
<div class="t" style="left:413.5px;top:502px;letter-spacing:0.16px;">Folder</div>
<div class="t" style="left:413.5px;top:520px;letter-spacing:0.45px;">File</div>
<div class="t" style="left:413.5px;top:538px;letter-spacing:0.1px;">Computer</div>
<div class="t" style="left:649.5px;top:322px;letter-spacing:0.16px;">Folder</div>
<div class="t" style="left:649.5px;top:340px;letter-spacing:0.45px;">File</div>
<div class="t" style="left:649.5px;top:358px;letter-spacing:0.1px;">Computer</div>
<div class="t" style="left:649.5px;top:376px;">Share</div>
<div class="t" style="left:649.5px;top:394px;letter-spacing:-0.2px;">CdRom</div>
<div class="t" style="left:649.5px;top:412px;letter-spacing:0.16px;">Folder</div>
<div class="t" style="left:649.5px;top:430px;letter-spacing:0.45px;">File</div>
<div class="t" style="left:649.5px;top:448px;letter-spacing:0.1px;">Computer</div>
<div class="t" style="left:649.5px;top:466px;">Share</div>
<div class="t" style="left:649.5px;top:484px;letter-spacing:-0.2px;">CdRom</div>
<div class="t" style="left:649.5px;top:502px;letter-spacing:0.16px;">Folder</div>
<div class="t" style="left:649.5px;top:520px;letter-spacing:0.45px;">File</div>
<div class="t" style="left:649.5px;top:538px;letter-spacing:0.1px;">Computer</div>
<div class="t" style="left:886.5px;top:322px;letter-spacing:0.16px;">Folder</div>
<div class="t" style="left:886.5px;top:340px;letter-spacing:0.45px;">File</div>
<div class="t" style="left:886.5px;top:358px;letter-spacing:0.1px;">Computer</div>
<div class="t" style="left:886.5px;top:376px;">Share</div>
<div class="t" style="left:886.5px;top:394px;letter-spacing:-0.2px;">CdRom</div>
<div class="t" style="left:886.5px;top:412px;letter-spacing:0.16px;">Folder</div>
<div class="t" style="left:886.5px;top:430px;letter-spacing:0.45px;">File</div>
<div class="t" style="left:886.5px;top:448px;letter-spacing:0.1px;">Computer</div>
<div class="t" style="left:886.5px;top:466px;">Share</div>
<div class="t" style="left:886.5px;top:484px;letter-spacing:-0.2px;">CdRom</div>
<div class="t" style="left:886.5px;top:502px;letter-spacing:0.16px;">Folder</div>
<div class="t" style="left:886.5px;top:520px;letter-spacing:0.45px;">File</div>
<div class="t" style="left:886.5px;top:538px;letter-spacing:0.1px;">Computer</div>
<div style="left:743px;top:221px;width:449px;height:10px;background:repeating-linear-gradient(90deg,#808080 0,#808080 1px,transparent 1px,transparent 4px);"></div>
<div style="left:648px;top:286px;width:10px;height:481px;background:repeating-linear-gradient(180deg,#808080 0,#808080 1px,transparent 1px,transparent 4px);"></div>
<div style="left:388px;top:49px;width:6px;height:6px;background:#0000ff;"></div>
<div style="left:563px;top:49px;width:6px;height:6px;background:#0000ff;"></div>
<div style="left:739px;top:49px;width:6px;height:6px;background:#0000ff;"></div>
<div style="left:388px;top:165px;width:6px;height:6px;background:#0000ff;"></div>
<div style="left:739px;top:165px;width:6px;height:6px;background:#0000ff;"></div>
<div style="left:388px;top:282px;width:6px;height:6px;background:#0000ff;"></div>
<div style="left:563px;top:282px;width:6px;height:6px;background:#0000ff;"></div>
<div style="left:739px;top:282px;width:6px;height:6px;background:#0000ff;"></div>
<div style="left:1136px;top:320px;width:6px;height:6px;background:#0000ff;"></div>
<div style="left:760px;top:603px;width:6px;height:6px;background:#0000ff;"></div>
<div style="left:1136px;top:603px;width:6px;height:6px;background:#0000ff;"></div>
</div>
</body></html>
